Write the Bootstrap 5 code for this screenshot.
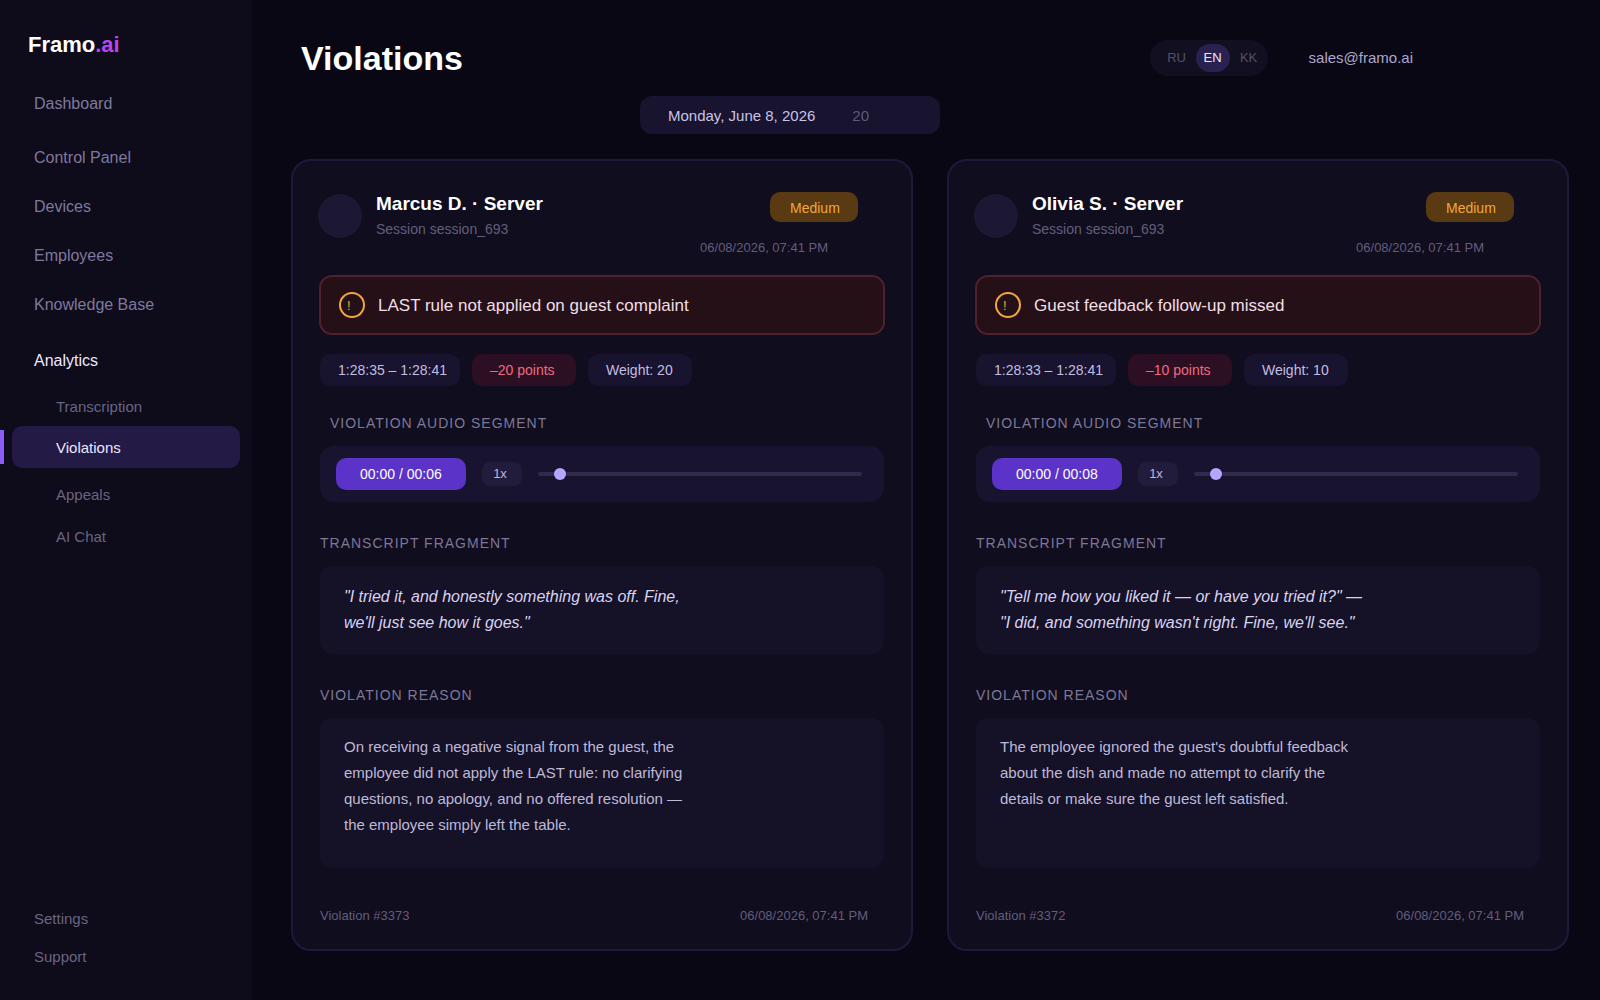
<!DOCTYPE html>
<html lang="en">
<head>
<meta charset="utf-8">
<meta name="viewport" content="width=device-width, initial-scale=1">
<title>Violations · Framo.ai</title>
<link rel="stylesheet" href="https://cdn.jsdelivr.net/npm/bootstrap@5.3.0/dist/css/bootstrap.min.css">
<style>
  body { background: #090713; color: #c9c3e6; font-family: "Liberation Sans", Arial, sans-serif; font-size: 15px; }
  a { text-decoration: none; }
  button { border: 0; color: inherit; }

  /* Sidebar */
  .side { width: 252px; background: #0e0b1a; }
  .brand { font-size: 22px; line-height: 28px; padding: 31px 28px 20px; color: #fff; }
  .brand span { color: #b845f0; }
  .side .nav-link { padding: 0 34px; font-size: 16px; line-height: 49px; color: #7f799e; }
  .side .nav-link.first { margin-bottom: 5px; }
  .side .nav-link.parent { margin-top: 7px; color: #ece8ff; }
  .side .sub .nav-link { padding: 0 44px; margin: 0 12px; font-size: 15px; line-height: 42px; color: #6a6484; }
  .side .sub .nav-link:first-child { padding-top: 2px; line-height: 39px; }
  .side .sub .nav-link.active { padding-top: 2px; line-height: 40px; background: #231a45; color: #ece8ff; border-radius: 10px; margin-bottom: 6px; position: relative; }
  .side .sub .nav-link.active::before { content: ""; position: absolute; left: -12px; top: 4px; bottom: 4px; width: 4px; background: #8b5cf6; }
  .side .low { padding-bottom: 24px; }
  .side .low .nav-link { font-size: 15px; line-height: 38px; color: #6a6484; }

  /* Top bar */
  .main-col { min-width: 0; padding: 36px 31px 24px 39px; }
  .topbar { padding: 0 156px 0 10px; height: 44px; }
  .topbar h1 { font-size: 34px; line-height: 44px; color: #fff; }
  .lang { background: #120f20; border-radius: 18px; padding: 4px 2px 4px 4px; gap: 2px; height: 36px; width: 118px; margin-right: 41px; font-size: 13px; color: #544f6e; }
  .lang button { background: none; width: 34px; height: 28px; border-radius: 14px; padding: 0; }
  .lang button.on { background: #2a2150; color: #ece8ff; }
  .mail { color: #aea8cc; }
  .daybar { width: 300px; height: 38px; margin: 16px 0 25px 349px; padding: 2px 28px 0; gap: 37px; background: #18132e; border-radius: 12px; }
  .daybar .total { color: #5f5978; }

  /* Violation cards */
  .cards { gap: 34px; }
  .vio { flex: 1 1 0; min-width: 0; background: #100d1e; border: 2px solid #1e193a; border-radius: 20px; padding: 31px 27px 23px; }
  .vio header { height: 83px; }
  .avatar { width: 44px; height: 44px; border-radius: 50%; background: #1c1733; margin: 2px 14px 0 -2px; }
  .vio h2 { font-size: 19px; line-height: 24px; color: #fff; }
  .dim { color: #635d7c; font-size: 13px; line-height: 20px; }
  .session { font-size: 14px; margin-top: 3px; }
  .level { background: #593a12; color: #f0a83c; font-size: 14px; line-height: 28px; border-radius: 10px; width: 88px; padding: 2px 0 0 20px; margin: 0 26px 16px 0; }
  .stamp { margin-right: 56px; }
  .rule { height: 60px; margin: 0 -1px; padding: 2px 18px 0; background: #251017; border: 2px solid #4f212e; border-radius: 13px; color: #f0dfe6; font-size: 17px; }
  .bang { width: 26px; height: 26px; border: 2px solid #f0a83c; border-radius: 50%; padding-left: 6px; font-size: 13px; line-height: 24px; color: #f0a83c; margin-right: 13px; margin-bottom: 3px; }
  .chips { gap: 12px; margin-top: 19px; }
  .chip { height: 32px; line-height: 32px; padding: 0 0 0 18px; border-radius: 10px; background: #18132e; color: #c3bde0; font-size: 14px; width: 104px; }
  .chip.wide { width: 140px; }
  .chip.loss { background: #2c0f22; color: #f06a7e; }
  .cap { font-size: 14px; line-height: 20px; font-weight: 400; letter-spacing: 1px; color: #7d7798; margin: 31px 0 13px; }
  .cap.audio { margin: 27px 10px 13px; }
  .player { height: 56px; border-radius: 14px; background: #18132e; padding: 0 22px 0 16px; }
  .play { width: 130px; height: 32px; padding: 0 0 0 24px; border-radius: 10px; background: #5b33c8; color: #fff; font-size: 14px; text-align: left; }
  .speed { width: 40px; height: 24px; padding: 0; padding-right: 4px; border-radius: 8px; background: #211b3c; color: #bdb6dc; font-size: 13px; margin: 0 16px; }
  .seek { flex: 1 1 0; min-width: 0; height: 12px; margin: 0; appearance: none; -webkit-appearance: none; background: none; }
  .seek::-webkit-slider-runnable-track { height: 4px; border-radius: 2px; background: #312a4e; }
  .seek::-webkit-slider-thumb { -webkit-appearance: none; width: 12px; height: 12px; margin-top: -4px; border-radius: 50%; background: #b8a5ff; }
  .seek::-moz-range-track { height: 4px; border-radius: 2px; background: #312a4e; }
  .seek::-moz-range-thumb { width: 12px; height: 12px; border: 0; background: #b8a5ff; }
  .box { background: #151126; border-radius: 12px; padding: 16px 24px 30px; line-height: 26px; }
  .quote { padding: 18px 24px; font-size: 16px; font-style: italic; color: #d9d3f2; }
  .why { min-height: 150px; color: #bfb9da; }
  .why p { max-width: 352px; margin: 0; }
  .foot { padding: 38px 16px 0 0; }
</style>
</head>
<body>
<div class="d-flex min-vh-100">
  <nav class="side d-flex flex-column flex-shrink-0" aria-label="Main">
    <a class="brand fw-bold" href="#">Framo<span>.ai</span></a>
    <div class="nav flex-column">
      <a class="nav-link first" href="#">Dashboard</a>
      <a class="nav-link" href="#">Control Panel</a>
      <a class="nav-link" href="#">Devices</a>
      <a class="nav-link" href="#">Employees</a>
      <a class="nav-link" href="#">Knowledge Base</a>
      <a class="nav-link parent" href="#">Analytics</a>
    </div>
    <div class="nav flex-column sub">
      <a class="nav-link" href="#">Transcription</a>
      <a class="nav-link active" href="#" aria-current="page">Violations</a>
      <a class="nav-link" href="#">Appeals</a>
      <a class="nav-link" href="#">AI Chat</a>
    </div>
    <div class="nav flex-column low mt-auto">
      <a class="nav-link" href="#">Settings</a>
      <a class="nav-link" href="#">Support</a>
    </div>
  </nav>

  <main class="main-col flex-grow-1">
    <div class="topbar d-flex align-items-center">
      <h1 class="fw-bold m-0 me-auto">Violations</h1>
      <div class="lang d-flex justify-content-end" role="group" aria-label="Language">
        <button type="button">RU</button>
        <button type="button" class="on">EN</button>
        <button type="button">KK</button>
      </div>
      <a class="mail" href="#">sales@framo.ai</a>
    </div>
    <div class="daybar d-flex align-items-center">
      <span>Monday, June 8, 2026</span>
      <span class="total">20</span>
    </div>

    <div class="cards d-flex">
      <article class="vio d-flex flex-column">
        <header class="d-flex">
          <div class="avatar flex-shrink-0"></div>
          <div>
            <h2 class="fw-bold m-0">Marcus D. · Server</h2>
            <div class="dim session">Session session_693</div>
          </div>
          <div class="ms-auto d-flex flex-column align-items-end">
            <span class="level">Medium</span>
            <time class="dim stamp">06/08/2026, 07:41 PM</time>
          </div>
        </header>
        <div class="rule d-flex align-items-center"><span class="bang">!</span>LAST rule not applied on guest complaint</div>
        <div class="chips d-flex">
          <span class="chip wide">1:28:35 – 1:28:41</span>
          <span class="chip loss">–20 points</span>
          <span class="chip">Weight: 20</span>
        </div>
        <h3 class="cap audio">VIOLATION AUDIO SEGMENT</h3>
        <div class="player d-flex align-items-center">
          <button type="button" class="play">00:00 / 00:06</button>
          <button type="button" class="speed">1x</button>
          <input class="seek" type="range" min="0" max="100" value="5" aria-label="Audio position">
        </div>
        <h3 class="cap">TRANSCRIPT FRAGMENT</h3>
        <div class="box quote">"I tried it, and honestly something was off. Fine,<br>we'll just see how it goes."</div>
        <h3 class="cap">VIOLATION REASON</h3>
        <div class="box why flex-grow-1"><p>On receiving a negative signal from the guest, the employee did not apply the LAST rule: no clarifying questions, no apology, and no offered resolution — the employee simply left the table.</p></div>
        <footer class="foot dim d-flex justify-content-between"><span>Violation #3373</span><time>06/08/2026, 07:41 PM</time></footer>
      </article>

      <article class="vio d-flex flex-column">
        <header class="d-flex">
          <div class="avatar flex-shrink-0"></div>
          <div>
            <h2 class="fw-bold m-0">Olivia S. · Server</h2>
            <div class="dim session">Session session_693</div>
          </div>
          <div class="ms-auto d-flex flex-column align-items-end">
            <span class="level">Medium</span>
            <time class="dim stamp">06/08/2026, 07:41 PM</time>
          </div>
        </header>
        <div class="rule d-flex align-items-center"><span class="bang">!</span>Guest feedback follow-up missed</div>
        <div class="chips d-flex">
          <span class="chip wide">1:28:33 – 1:28:41</span>
          <span class="chip loss">–10 points</span>
          <span class="chip">Weight: 10</span>
        </div>
        <h3 class="cap audio">VIOLATION AUDIO SEGMENT</h3>
        <div class="player d-flex align-items-center">
          <button type="button" class="play">00:00 / 00:08</button>
          <button type="button" class="speed">1x</button>
          <input class="seek" type="range" min="0" max="100" value="5" aria-label="Audio position">
        </div>
        <h3 class="cap">TRANSCRIPT FRAGMENT</h3>
        <div class="box quote">"Tell me how you liked it — or have you tried it?" —<br>"I did, and something wasn't right. Fine, we'll see."</div>
        <h3 class="cap">VIOLATION REASON</h3>
        <div class="box why flex-grow-1"><p>The employee ignored the guest's doubtful feedback about the dish and made no attempt to clarify the details or make sure the guest left satisfied.</p></div>
        <footer class="foot dim d-flex justify-content-between"><span>Violation #3372</span><time>06/08/2026, 07:41 PM</time></footer>
      </article>
    </div>
  </main>
</div>
<script src="https://cdn.jsdelivr.net/npm/bootstrap@5.3.0/dist/js/bootstrap.bundle.min.js"></script>
</body>
</html>
